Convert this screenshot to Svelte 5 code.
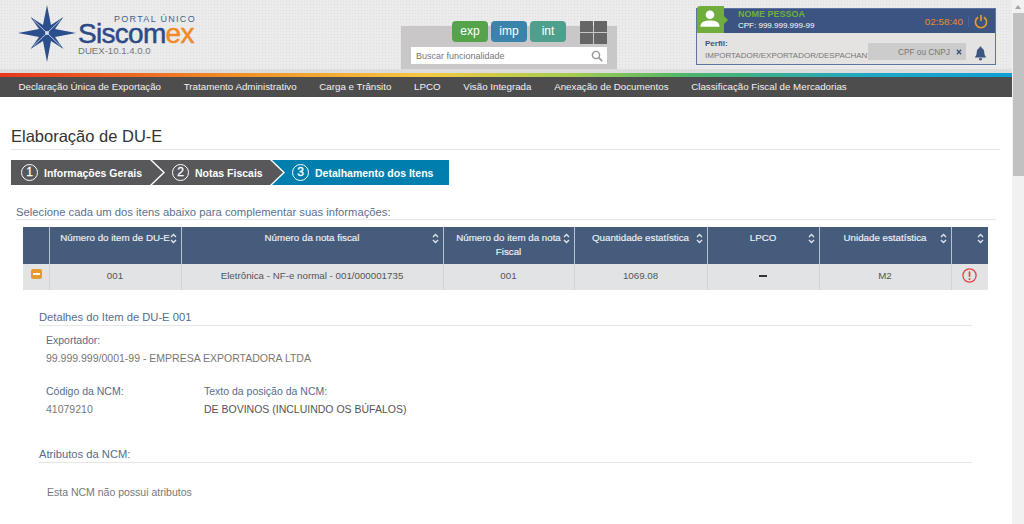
<script>
  const menu = [
    "Declaração Única de Exportação",
    "Tratamento Administrativo",
    "Carga e Trânsito",
    "LPCO",
    "Visão Integrada",
    "Anexação de Documentos",
    "Classificação Fiscal de Mercadorias",
  ];
  const steps = [
    { n: 1, label: "Informações Gerais", width: 152 },
    { n: 2, label: "Notas Fiscais", width: 131 },
    { n: 3, label: "Detalhamento dos Itens", width: 177, active: true },
  ];
  const columns = [
    { label: "Número do item de DU-E", width: 132 },
    { label: "Número da nota fiscal", width: 262 },
    { label: "Número do item da nota Fiscal", width: 131 },
    { label: "Quantidade estatística", width: 133 },
    { label: "LPCO", width: 112 },
    { label: "Unidade estatística", width: 132 },
    { label: "", width: 37 },
  ];
</script>

<div class="page">
  <main>
    <header>
      <div class="logo">
        <svg class="star" width="60" height="58" viewBox="0 0 60 58" aria-hidden="true">
          <path
            fill="#2b4f8c"
            d="M30 0 L34 20 L46.5 12 L38 24 L59 28 L38 32 L46.5 44 L34 36 L30 57 L26 36 L13.5 44 L22 32 L1 28 L22 24 L13.5 12 L26 20 Z"
          />
          <path d="M16.5 15 L43.5 41 M43.5 15 L16.5 41" stroke="#c9d3e4" stroke-width="0.9" />
          <circle cx="30" cy="28" r="2" fill="#d5dcea" />
        </svg>
        <div class="brand">
          <div class="portal">PORTAL ÚNICO</div>
          <div class="name">Siscom<span>ex</span></div>
          <div class="version">DUEX-10.1.4.0.0</div>
        </div>
      </div>

      <div class="finder">
        <div class="apps">
          <span class="app exp">exp</span>
          <span class="app imp">imp</span>
          <span class="app int">int</span>
          <span class="tiles"><i></i><i></i><i></i><i></i></span>
        </div>
        <div class="search">
          <span>Buscar funcionalidade</span>
          <svg width="12" height="12" viewBox="0 0 14 14" aria-hidden="true">
            <circle cx="5.8" cy="5.8" r="4.2" fill="none" stroke="#999" stroke-width="1.7" />
            <path d="M9 9 L13 13" stroke="#999" stroke-width="2" />
          </svg>
        </div>
      </div>

      <div class="user">
        <div class="user-top">
          <div class="avatar">
            <svg width="20" height="17" viewBox="0 0 24 20" aria-hidden="true">
              <circle cx="12" cy="5.5" r="5.2" fill="#fff" />
              <path d="M0.5 20 C0.5 14 6 12.5 12 12.5 C18 12.5 23.5 14 23.5 20 Z" fill="#fff" />
            </svg>
          </div>
          <div class="who">
            <div class="person">NOME PESSOA</div>
            <div class="cpf">CPF: 999.999.999-99</div>
          </div>
          <div class="clock">02:58:40</div>
          <svg class="power" width="14" height="15" viewBox="0 0 16 16" aria-hidden="true">
            <path d="M4.8 3.2 A6.4 6.4 0 1 0 11.2 3.2" fill="none" stroke="#f09a2a" stroke-width="1.8" />
            <path d="M8 0.5 L8 7.5" stroke="#f09a2a" stroke-width="1.9" />
          </svg>
        </div>
        <div class="user-bottom">
          <div class="profile">
            <div class="profile-label">Perfil:</div>
            <div class="profile-value">IMPORTADOR/EXPORTADOR/DESPACHANTE</div>
          </div>
          <div class="cnpj">
            <span>CPF ou CNPJ</span>
            <svg width="6" height="6" viewBox="0 0 7 7" aria-hidden="true">
              <path d="M1 1 L6 6 M6 1 L1 6" stroke="#3b5482" stroke-width="1.6" />
            </svg>
          </div>
          <svg class="bell" width="13" height="15" viewBox="0 0 14 17" aria-hidden="true">
            <path d="M7 0.5 C8 0.5 8.3 1.2 8.2 2.2 C10.6 3 11.2 5.2 11.3 7.6 C11.4 10.2 12.4 11.6 13.6 13 L0.4 13 C1.6 11.6 2.6 10.2 2.7 7.6 C2.8 5.2 3.4 3 5.8 2.2 C5.7 1.2 6 0.5 7 0.5 Z" fill="#3b5482" />
            <path d="M5 14 L9 14 C9 15.4 8.2 16.4 7 16.4 C5.8 16.4 5 15.4 5 14 Z" fill="#3b5482" />
          </svg>
        </div>
      </div>
    </header>

    <div class="strip"></div>
    <div class="rainbow"></div>

    <nav>
      {#each menu as item}
        <span>{item}</span>
      {/each}
    </nav>

    <section class="content">
      <h1>Elaboração de DU-E</h1>

      <div class="steps">
        {#each steps as s, i}
          <div class="step" class:first={i === 0} class:active={s.active} style="width: {s.width}px; z-index: {3 - i}">
            <span class="num">{s.n}</span>
            <span>{s.label}</span>
          </div>
        {/each}
      </div>

      <h2 class="hint">Selecione cada um dos itens abaixo para complementar suas informações:</h2>

      <table>
        <colgroup>
          <col style="width: 26px" />
          {#each columns as c}
            <col style="width: {c.width}px" />
          {/each}
        </colgroup>
        <thead>
          <tr>
            <th></th>
            {#each columns as c}
              <th>
                <div class="th">
                  <span>{c.label}</span>
                  <svg width="7" height="11" viewBox="0 0 7 11" aria-hidden="true">
                    <path d="M1 4 L3.5 1.5 L6 4 M1 7 L3.5 9.5 L6 7" fill="none" stroke="#e4e8ee" stroke-width="1.3" />
                  </svg>
                </div>
              </th>
            {/each}
          </tr>
        </thead>
        <tbody>
          <tr>
            <td class="toggle"><span class="minus"></span></td>
            <td>001</td>
            <td>Eletrônica - NF-e normal - 001/000001735</td>
            <td>001</td>
            <td>1069.08</td>
            <td><span class="dash"></span></td>
            <td>M2</td>
            <td class="alert">
              <svg width="15" height="15" viewBox="0 0 15 15" aria-hidden="true">
                <circle cx="7.5" cy="7.5" r="6.6" fill="none" stroke="#e8423f" stroke-width="1.3" />
                <path d="M7.5 3.4 L7.5 8.8" stroke="#e8423f" stroke-width="1.7" />
                <circle cx="7.5" cy="11" r="1" fill="#e8423f" />
              </svg>
            </td>
          </tr>
        </tbody>
      </table>

      <div class="details">
        <h3>Detalhes do Item de DU-E 001</h3>
        <div class="field exporter">
          <label>Exportador:</label>
          <p>99.999.999/0001-99 - EMPRESA EXPORTADORA LTDA</p>
        </div>
        <div class="pair">
          <div class="field code">
            <label>Código da NCM:</label>
            <p>41079210</p>
          </div>
          <div class="field">
            <label>Texto da posição da NCM:</label>
            <p class="dark">DE BOVINOS (INCLUINDO OS BÚFALOS)</p>
          </div>
        </div>
        <h3 class="attrs">Atributos da NCM:</h3>
        <p class="empty">Esta NCM não possui atributos</p>
      </div>
    </section>
  </main>

  <aside class="scrollbar">
    <span class="arrow"></span>
    <span class="thumb"></span>
  </aside>
</div>

<style>
  :global(body) {
    margin: 0;
    background: #fff;
    font-family: "Liberation Sans", Arial, sans-serif;
  }
  .page {
    display: flex;
    height: 524px;
    overflow: hidden;
  }
  main {
    flex: 1;
    min-width: 0;
  }

  header {
    display: flex;
    height: 69px;
    background-color: #ebebeb;
    background-image: radial-gradient(#dedede 1px, transparent 1px);
    background-size: 3px 3px;
  }

  .logo {
    display: flex;
    width: 401px;
    flex: none;
    padding: 5px 0 0 17px;
    box-sizing: border-box;
  }
  .star {
    flex: none;
  }
  .brand {
    margin-left: 1px;
  }
  .portal {
    margin: 9px 0 0 36px;
    font-size: 9px;
    line-height: 10px;
    letter-spacing: 1.3px;
    color: #46618f;
    white-space: nowrap;
  }
  .name {
    margin-top: -2px;
    font-size: 28px;
    line-height: 24px;
    letter-spacing: -0.7px;
    color: #2c4a86;
    -webkit-text-stroke: 0.5px currentColor;
  }
  .name span {
    color: #f08a24;
  }
  .version {
    margin-top: -1px;
    font-size: 9.6px;
    line-height: 12px;
    color: #777;
  }

  .finder {
    flex: none;
    width: 216px;
    height: 43px;
    margin-top: 26px;
    background: #c9c7c7;
  }
  .apps {
    display: flex;
    align-items: flex-start;
    gap: 3px;
    margin: -5px 0 0 51px;
  }
  .app {
    width: 36px;
    height: 21px;
    border-radius: 4px;
    color: #fff;
    font-size: 12px;
    line-height: 20px;
    text-align: center;
  }
  .exp { background: #55a44c; }
  .imp { background: #3a84ab; }
  .int { background: #4f9f8d; }
  .tiles {
    display: grid;
    grid-template-columns: 13px 13px;
    grid-auto-rows: 11px;
    gap: 1px;
    margin-left: 11px;
  }
  .tiles i {
    background: #666;
  }
  .search {
    height: 17px;
    margin: 3px 10px 0;
    box-sizing: border-box;
    padding: 0 4px 0 5px;
    display: flex;
    align-items: center;
    justify-content: space-between;
    background: #fff;
    font-size: 9px;
    color: #777;
  }

  .user {
    flex: none;
    width: 300px;
    height: 57px;
    margin: 8px 0 0 79px;
    border: 1px solid #5d74a0;
    box-sizing: border-box;
    background: #e5e2e2;
  }
  .user-top {
    display: flex;
    align-items: center;
    height: 24px;
    background: #3b5482;
  }
  .avatar {
    position: relative;
    align-self: flex-start;
    flex: none;
    width: 27px;
    height: 27px;
    margin-top: -3px;
    padding: 4px 0 0 3px;
    box-sizing: border-box;
    background: #71ad3d;
    border-radius: 3px 0 0 0;
  }
  .avatar svg {
    display: block;
  }
  .avatar::after {
    content: "";
    position: absolute;
    right: -4px;
    top: 10px;
    border-left: 4px solid #71ad3d;
    border-top: 4px solid transparent;
    border-bottom: 4px solid transparent;
  }
  .who {
    margin: -2px 0 0 14px;
    flex: 1;
  }
  .person {
    font-size: 9px;
    line-height: 12px;
    font-weight: bold;
    color: #6fb03c;
  }
  .cpf {
    font-size: 8px;
    line-height: 12px;
    color: #fff;
  }
  .clock {
    font-size: 9.8px;
    color: #ef8a2e;
    padding-right: 5px;
    border-right: 1px solid #4a6290;
  }
  .power {
    margin: 0 7px 0 5px;
  }
  .user-bottom {
    display: flex;
    height: 31px;
    padding-left: 8px;
  }
  .profile {
    width: 163px;
    overflow: hidden;
    white-space: nowrap;
    padding-top: 5px;
  }
  .profile-label {
    font-size: 8px;
    line-height: 12px;
    font-weight: bold;
    color: #3b5482;
  }
  .profile-value {
    font-size: 8px;
    line-height: 12px;
    color: #777;
  }
  .cnpj {
    width: 98px;
    height: 17px;
    margin-top: 10px;
    box-sizing: border-box;
    padding-right: 4px;
    display: flex;
    align-items: center;
    justify-content: flex-end;
    gap: 6px;
    background: #ccc;
    font-size: 8.3px;
    color: #777;
  }
  .bell {
    margin: 13px 0 0 8px;
  }

  .strip {
    height: 4px;
    background: #dcdcdc;
  }
  .rainbow {
    height: 4px;
    background: linear-gradient(90deg, #e8371e 0, #f08a24 22%, #f5c842 42%, #a8cc4e 56%, #4db56a 68%, #1fa7c4 86%, #0f9fd5 100%);
  }
  nav {
    display: flex;
    gap: 22.7px;
    height: 20px;
    box-sizing: border-box;
    padding: 0 0 2px 18.5px;
    align-items: center;
    background: #4d4d4d;
    color: #f2f2f2;
    font-size: 9.75px;
    white-space: nowrap;
  }

  .content {
    padding: 29px 12px 0 11px;
  }
  h1 {
    margin: 0;
    padding-bottom: 1px;
    border-bottom: 1px solid #e6e6e6;
    font-size: 16.5px;
    line-height: 21px;
    font-weight: normal;
    color: #333;
    padding-bottom: 2px;
  }

  .steps {
    display: flex;
    margin-top: 10px;
  }
  .step {
    position: relative;
    flex: none;
    height: 25px;
    box-sizing: border-box;
    margin-right: -11px;
    padding-left: 20px;
    display: flex;
    align-items: center;
    gap: 6px;
    background: #58585a;
    color: #fff;
    font-size: 10.5px;
    font-weight: bold;
    white-space: nowrap;
    clip-path: polygon(0 0, calc(100% - 13px) 0, 100% 50%, calc(100% - 13px) 100%, 0 100%, 13px 50%);
  }
  .step.first {
    padding-left: 10px;
    clip-path: polygon(0 0, calc(100% - 13px) 0, 100% 50%, calc(100% - 13px) 100%, 0 100%);
  }
  .step.active {
    background: #007fae;
    clip-path: polygon(0 0, 100% 0, 100% 100%, 0 100%, 13px 50%);
  }
  .num {
    flex: none;
    width: 15px;
    height: 15px;
    border: 1.5px solid #fff;
    border-radius: 50%;
    text-align: center;
    font-size: 12px;
    font-weight: normal;
    line-height: 15px;
    -webkit-text-stroke: 0.3px currentColor;
  }

  .hint {
    margin: 21px 4px 0 5px;
    border-bottom: 1px solid #e6e6e6;
    font-size: 11.25px;
    line-height: 13px;
    font-weight: normal;
    color: #5c6f8c;
  }

  table {
    width: 965px;
    margin: 7px 0 0 12px;
    border-collapse: collapse;
    table-layout: fixed;
  }
  th {
    height: 37px;
    padding: 4px 4px 0;
    box-sizing: border-box;
    vertical-align: top;
    background: #465c7c;
    border-left: 1px solid #b9c2cf;
    color: #eef1f5;
    font-size: 9.75px;
    line-height: 14px;
    font-weight: normal;
    -webkit-text-stroke: 0.15px currentColor;
  }
  th:first-child {
    border-left: 0;
  }
  .th {
    display: flex;
    align-items: flex-start;
  }
  .th span {
    flex: 1;
    min-width: 0;
    text-align: center;
  }
  /* sort arrows overlap the label box so labels centre on the whole cell */
  .th svg {
    flex: none;
    margin: 2px 0 0 -7px;
  }
  td {
    height: 26px;
    padding: 0 0 3px;
    box-sizing: border-box;
    text-align: center;
    background: #e2e3e5;
    border-left: 1px solid #d2d3d5;
    font-size: 9.75px;
    color: #555;
  }
  td:first-child {
    border-left: 0;
  }
  .toggle {
    text-align: left;
    padding: 5px 0 0 8px;
    vertical-align: top;
  }
  .minus {
    display: block;
    position: relative;
    width: 11px;
    height: 10px;
    border-radius: 2px;
    background: #e69a2e;
  }
  .minus::after {
    content: "";
    position: absolute;
    left: 2px;
    right: 2px;
    top: 4px;
    height: 2px;
    background: #fff;
  }
  .dash {
    display: inline-block;
    width: 8px;
    height: 2px;
    background: #333;
    vertical-align: middle;
  }
  .alert svg {
    display: block;
    margin: 0 auto;
  }

  .details {
    padding: 20px 28px 0 28px;
  }
  h3 {
    margin: 0;
    padding-bottom: 1px;
    border-bottom: 1px solid #e6e6e6;
    font-size: 11.2px;
    line-height: 14px;
    font-weight: normal;
    color: #566c8c;
  }
  .field label {
    display: block;
    font-size: 10.5px;
    line-height: 14px;
    color: #566c8c;
  }
  .field p {
    margin: 4px 0 0;
    font-size: 10.5px;
    line-height: 14px;
    color: #777;
  }
  .field p.dark {
    color: #555;
  }
  .exporter {
    margin: 7px 0 0 7px;
  }
  .pair {
    display: flex;
    margin: 19px 0 0 7px;
  }
  .code {
    width: 158px;
  }
  .attrs {
    margin-top: 31px;
  }
  .empty {
    margin: 22px 0 0 8px;
    font-size: 10.5px;
    line-height: 14px;
    color: #777;
  }

  .scrollbar {
    flex: none;
    width: 12px;
    background: #f1f1f1;
    display: flex;
    flex-direction: column;
  }
  .arrow {
    width: 0;
    height: 0;
    margin: 5px auto 4px;
    border-left: 3px solid transparent;
    border-right: 3px solid transparent;
    border-bottom: 4px solid #a3a3a3;
  }
  .thumb {
    height: 163px;
    margin-left: 1px;
    background: #c1c1c1;
  }
</style>
